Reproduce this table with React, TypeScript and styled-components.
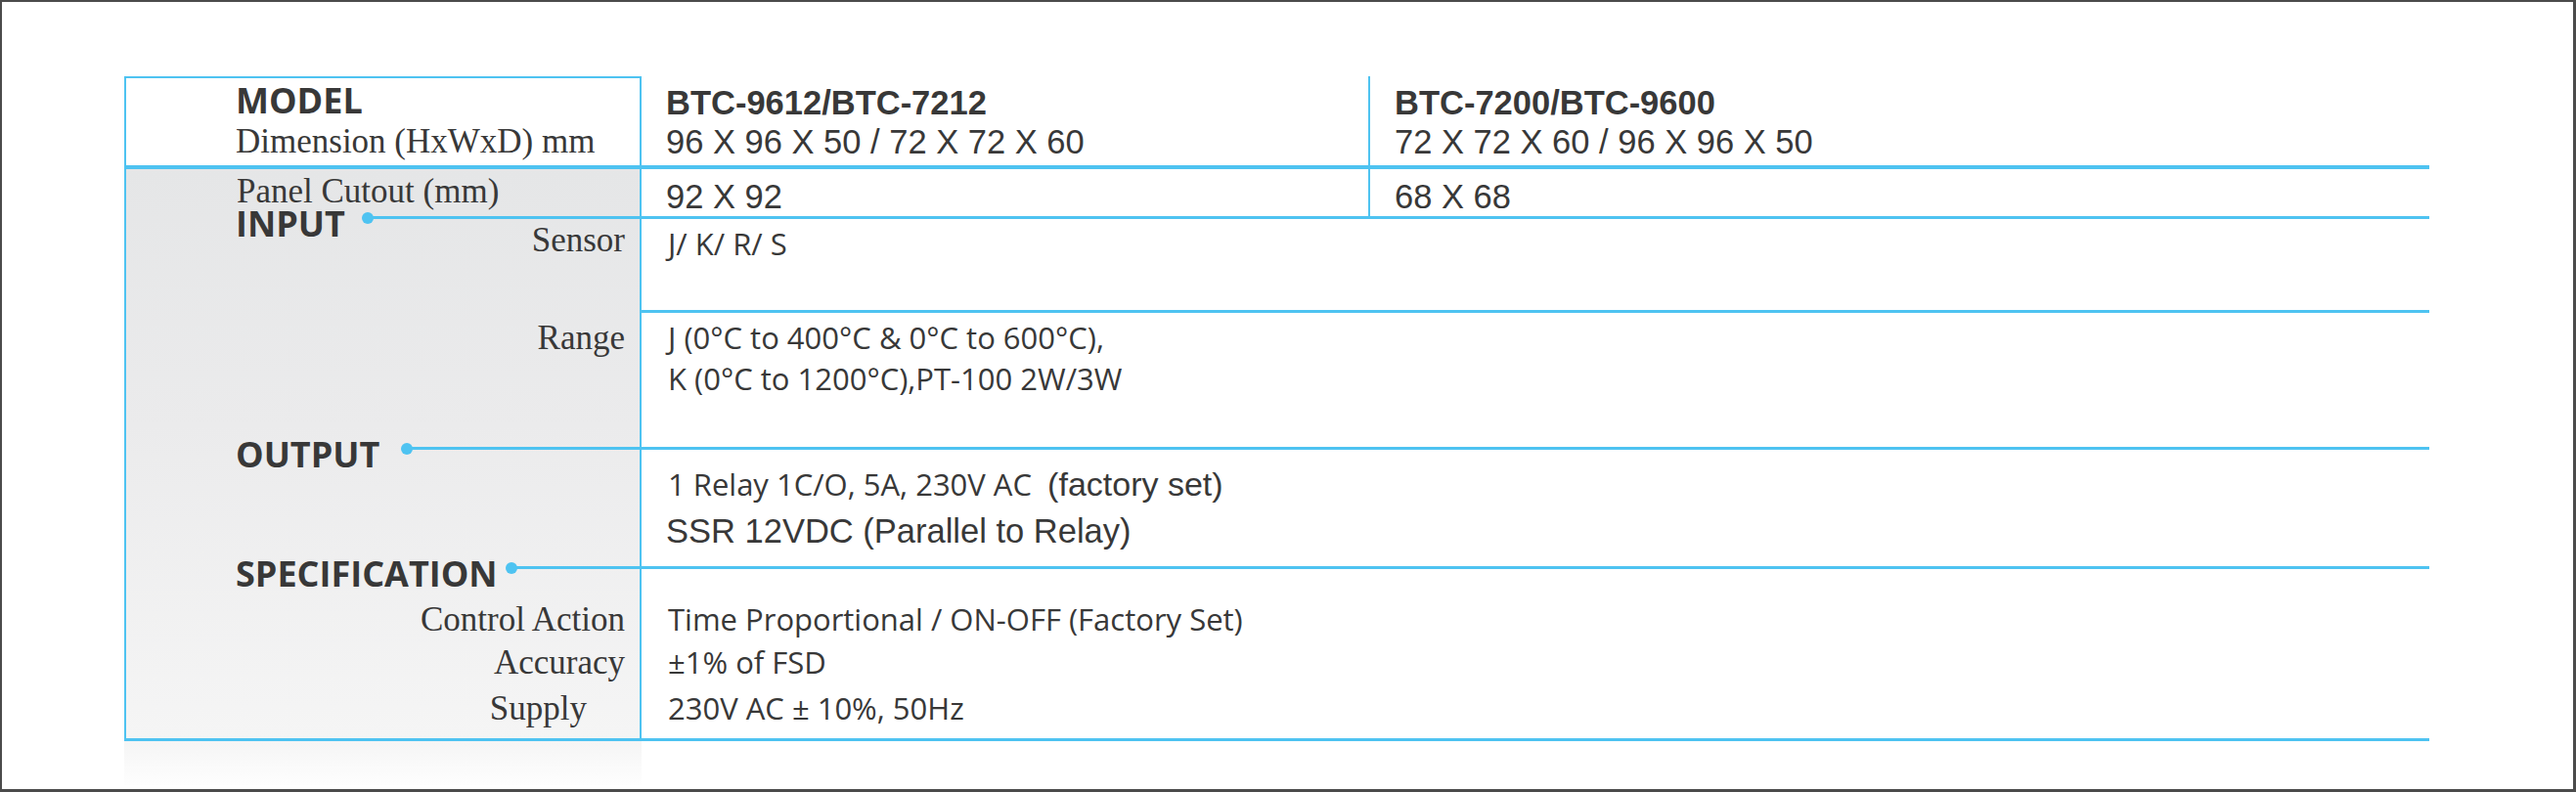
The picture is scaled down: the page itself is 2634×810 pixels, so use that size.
import React from 'react'
import styled, { createGlobalStyle } from 'styled-components'

const BLUE = '#4ec3f1'
const INK = '#383838'
const LABEL_COL = '525px'

const GlobalStyle = createGlobalStyle`
  *, *::before, *::after { box-sizing: border-box; }
  html, body { margin: 0; padding: 0; background: #fff; }
  body {
    font-family: "Liberation Sans", Arial, sans-serif;
    color: ${INK};
  }
`

const Frame = styled.div`
  width: 2634px;
  height: 810px;
  border: solid #4b4b4b;
  border-width: 2px 3px 3px 2px;
  padding: 76px 0 0 125px;
  background: #fff;
`

const Table = styled.div`
  width: 2357px;
  border-left: 2px solid ${BLUE};
  border-bottom: 3px solid ${BLUE};
`

const HeaderRow = styled.div`
  display: grid;
  grid-template-columns: ${LABEL_COL} 1fr;
  border-bottom: 4px solid ${BLUE};
`

const HeadLabel = styled.div`
  height: 91px;
  background: #fff;
  border-top: 2px solid ${BLUE};
  padding: 3px 0 0 112px;
`

const Heading = styled.div`
  font-family: "Open Sans", sans-serif;
  font-weight: 700;
  font-size: 36px;
  line-height: 40px;
  white-space: nowrap;
`

const SerifLabel = styled.div<{ $right?: boolean; $pt?: number; $mt?: number; $indent?: number; $lh?: number; $flush?: boolean }>`
  font-family: "Liberation Serif", "Times New Roman", serif;
  font-size: 35px;
  line-height: ${(p) => p.$lh ?? 40}px;
  white-space: nowrap;
  text-align: ${(p) => (p.$right ? 'right' : 'left')};
  margin-top: ${(p) => p.$mt ?? 0}px;
  padding-top: ${(p) => p.$pt ?? 0}px;
  padding-right: ${(p) => (p.$right ? 15 + (p.$indent ?? 0) : 0)}px;
  padding-left: ${(p) => (p.$right || p.$flush ? 0 : 113)}px;
`

const Models = styled.div`
  display: grid;
  grid-template-columns: 743px 1fr;
  border-left: 2px solid ${BLUE};
`

const ModelCell = styled.div<{ $pt: number; $divider?: boolean }>`
  padding: ${(p) => p.$pt}px 0 0 25px;
  border-left: ${(p) => (p.$divider ? `2px solid ${BLUE}` : 'none')};
`

const ModelName = styled.div`
  font-weight: 700;
  font-size: 34.5px;
  line-height: 40px;
  white-space: nowrap;
`

const Dims = styled.div<{ $lh?: number; $mt?: number }>`
  font-size: 34.5px;
  line-height: ${(p) => p.$lh ?? 36}px;
  margin-top: ${(p) => p.$mt ?? 0}px;
  white-space: nowrap;
`

const Body = styled.div`
  background: linear-gradient(180deg, #e5e6e7 0%, #ebebec 45%, #f5f5f5 100%) 0 0 / ${LABEL_COL} 100% no-repeat;
`

const Row = styled.div<{ $h: number }>`
  display: grid;
  grid-template-columns: ${LABEL_COL} 1fr;
  height: ${(p) => p.$h}px;
`

const LabelStack = styled.div<{ $pt: number }>`
  padding-top: ${(p) => p.$pt}px;
`

const Value = styled.div<{ $pt: number; $ruled?: boolean }>`
  border-left: 2px solid ${BLUE};
  border-top: ${(p) => (p.$ruled ? `3px solid ${BLUE}` : 'none')};
  padding: ${(p) => p.$pt}px 0 0 27px;
  white-space: nowrap;
`

const Text = styled.div<{ $lh?: number; $mt?: number }>`
  font-family: "Open Sans", sans-serif;
  font-size: 31px;
  line-height: ${(p) => p.$lh ?? 42}px;
  margin-top: ${(p) => p.$mt ?? 0}px;
`

const Plain = styled.div<{ $mt?: number }>`
  font-family: "Liberation Sans", Arial, sans-serif;
  font-size: 34.5px;
  line-height: 42px;
  margin-top: ${(p) => p.$mt ?? 0}px;
  margin-left: -2px;
`

const Alt = styled.span`
  font-family: "Liberation Sans", Arial, sans-serif;
  font-size: 34px;
`

const SectionRule = styled.div`
  display: flex;
  align-items: flex-start;
  height: 3px;
  padding-left: 112px;
`

const SectionTitle = styled(Heading)`
  line-height: 30px;
  margin-top: -7px;
`

const Dot = styled.span<{ $gap: number }>`
  flex: none;
  width: 12px;
  height: 12px;
  border-radius: 50%;
  background: ${BLUE};
  margin: -4.5px 0 0 ${(p) => p.$gap}px;
`

const RuleLine = styled.span`
  flex: 1;
  height: 3px;
  margin-left: -6px;
  background: ${BLUE};
`

const Fade = styled.div`
  width: 529px;
  height: 45px;
  background: linear-gradient(180deg, #f5f5f5, #fefefe);
`

const Section = ({ title, gap }: { title: string; gap: number }) => (
  <SectionRule>
    <SectionTitle>{title}</SectionTitle>
    <Dot $gap={gap} />
    <RuleLine />
  </SectionRule>
)

const specs = [
  { label: 'Control Action', value: 'Time Proportional / ON-OFF (Factory Set)', mt: 0 },
  { label: 'Accuracy', value: '±1% of FSD', mt: -1 },
  { label: 'Supply', value: '230V AC ± 10%, 50Hz', mt: 2, indent: 39 },
]

export default function App() {
  return (
    <>
      <GlobalStyle />
      <Frame>
        <Table>
          <HeaderRow>
            <HeadLabel>
              <Heading>MODEL</Heading>
              <SerifLabel $flush $mt={2}>Dimension (HxWxD) mm</SerifLabel>
            </HeadLabel>
            <Models>
              <ModelCell $pt={7}>
                <ModelName>BTC-9612/BTC-7212</ModelName>
                <Dims $mt={2}>96 X 96 X 50 / 72 X 72 X 60</Dims>
              </ModelCell>
              <ModelCell $pt={7} $divider>
                <ModelName>BTC-7200/BTC-9600</ModelName>
                <Dims $mt={2}>72 X 72 X 60 / 96 X 96 X 50</Dims>
              </ModelCell>
            </Models>
          </HeaderRow>

          <Body>
            <Row $h={48}>
              <SerifLabel $pt={5} $lh={36}>Panel Cutout (mm)</SerifLabel>
              <Models>
                <ModelCell $pt={8}>
                  <Dims $lh={40}>92 X 92</Dims>
                </ModelCell>
                <ModelCell $pt={8} $divider>
                  <Dims $lh={40}>68 X 68</Dims>
                </ModelCell>
              </Models>
            </Row>

            <Section title="INPUT" gap={17} />
            <Row $h={93}>
              <SerifLabel $right $pt={2}>Sensor</SerifLabel>
              <Value $pt={5}>
                <Text $lh={40}>J/ K/ R/ S</Text>
              </Value>
            </Row>
            <Row $h={140}>
              <SerifLabel $right $pt={9}>Range</SerifLabel>
              <Value $pt={4} $ruled>
                <Text>J (0°C to 400°C &amp; 0°C to 600°C),</Text>
                <Text>K (0°C to 1200°C),PT-100 2W/3W</Text>
              </Value>
            </Row>

            <Section title="OUTPUT" gap={22} />
            <Row $h={119}>
              <div />
              <Value $pt={14}>
                <Text>
                  1 Relay 1C/O, 5A, 230V AC{'\u00a0 '}
                  <Alt>(factory set)</Alt>
                </Text>
                <Plain $mt={6}>SSR 12VDC (Parallel to Relay)</Plain>
              </Value>
            </Row>

            <Section title="SPECIFICATION" gap={8} />
            <Row $h={173}>
              <LabelStack $pt={29}>
                {specs.map((s) => (
                  <SerifLabel key={s.label} $right $lh={45} $mt={s.mt} $indent={s.indent}>
                    {s.label}
                  </SerifLabel>
                ))}
              </LabelStack>
              <Value $pt={29}>
                {specs.map((s) => (
                  <Text key={s.label} $lh={45} $mt={s.mt}>
                    {s.value}
                  </Text>
                ))}
              </Value>
            </Row>
          </Body>
        </Table>
        <Fade />
      </Frame>
    </>
  )
}
